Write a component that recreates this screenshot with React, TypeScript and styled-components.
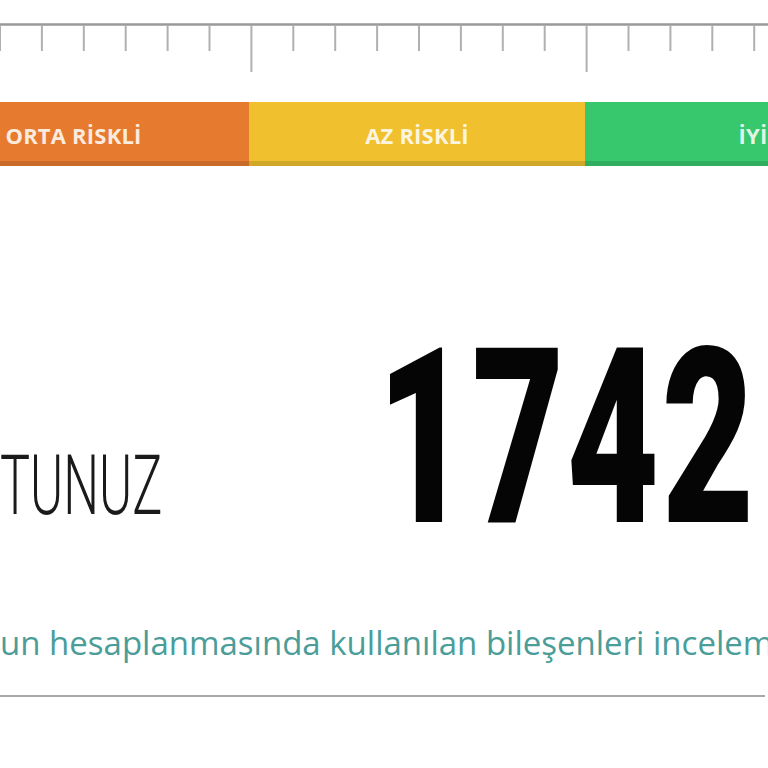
import React from "react";
import styled, { createGlobalStyle } from "styled-components";

const Global = createGlobalStyle`
  html, body {
    margin: 0;
    padding: 0;
    background: #ffffff;
    overflow: hidden;
  }
  body {
    width: 768px;
    height: 768px;
    font-family: "Open Sans", "Liberation Sans", sans-serif;
  }
`;

const Page = styled.div`
  width: 768px;
  height: 768px;
  display: flex;
  flex-direction: column;
  overflow: hidden;
`;

const RulerSvg = styled.svg`
  display: block;
  width: 768px;
  height: 76px;
  flex: none;
`;

const Bar = styled.div`
  display: flex;
  margin-top: 26px;
  margin-left: -90px;
  height: 64px;
  flex: none;
`;

const Segment = styled.div<{ $bg: string; $w: number; $shift?: number }>`
  flex: none;
  width: ${(p) => p.$w}px;
  height: 64px;
  background: ${(p) => p.$bg};
  box-shadow: inset 0 -5px 0 rgba(0, 0, 0, 0.13);
  display: flex;
  align-items: center;
  justify-content: center;
  padding-right: ${(p) => p.$shift ?? 0}px;
  padding-top: 2px;
  box-sizing: border-box;
  color: rgba(255, 255, 255, 0.86);
  font-family: "Open Sans", "Liberation Sans", sans-serif;
  font-weight: 700;
  font-size: 22px;
  letter-spacing: 0.2px;
  white-space: nowrap;
`;

const ScoreRow = styled.div`
  display: flex;
  align-items: flex-start;
  margin-top: 150px;
  height: 245px;
  flex: none;
`;

const Label = styled.div`
  flex: none;
  width: 0;
  margin-top: 128px;
  display: flex;
  font-family: "Roboto", "DejaVu Sans", sans-serif;
  font-weight: 300;
  font-size: 84px;
  line-height: 1;
  color: #1a1a1a;
  white-space: nowrap;
  transform: scaleX(0.6);
  transform-origin: 0 50%;
`;

const Hidden = styled.span`
  display: flex;
  justify-content: flex-end;
  width: 0;
`;

const Score = styled.div`
  flex: none;
  margin-left: 377px;
  font-family: "Roboto", "Liberation Sans", sans-serif;
  font-weight: 900;
  font-size: 245px;
  line-height: 1;
  color: #050505;
  letter-spacing: 4px;
  transform: scaleX(0.65);
  transform-origin: 0 50%;
`;

const InfoLink = styled.div`
  margin-top: 62px;
  display: flex;
  font-family: "Open Sans", "Noto Sans", sans-serif;
  font-size: 33px;
  line-height: 40px;
  color: #4a9d99;
  white-space: nowrap;
  flex: none;
`;

const Divider = styled.div`
  margin-top: 32px;
  width: 765px;
  height: 2px;
  background: #a9a9a9;
  flex: none;
`;

const ticks = Array.from({ length: 20 }, (_, k) => k * 41.9);

function Ruler() {
  return (
    <RulerSvg viewBox="0 0 768 76">
      <line x1="0" y1="24.5" x2="768" y2="24.5" stroke="#999999" strokeWidth="2.5" />
      {ticks.map((x, k) => {
        const long = k === 6 || k === 14;
        return (
          <line
            key={k}
            x1={x}
            y1={25}
            x2={x}
            y2={long ? 72 : 51}
            stroke="#b0b0b0"
            strokeWidth="2"
          />
        );
      })}
    </RulerSvg>
  );
}

export default function App() {
  return (
    <>
      <Global />
      <Page>
        <Ruler />
        <Bar>
          <Segment $bg="#e67b2f" $w={339} $shift={12}>ORTA RİSKLİ</Segment>
          <Segment $bg="#f0c02f" $w={336}>AZ RİSKLİ</Segment>
          <Segment $bg="#37c86e" $w={336}>İYİ</Segment>
        </Bar>
        <ScoreRow>
          <Label>
            <Hidden>KREDİ NO</Hidden>
            <span>TUNUZ</span>
          </Label>
          <Score>1742</Score>
        </ScoreRow>
        <InfoLink>
          <Hidden>Kredi Notunuz</Hidden>
          <span>un hesaplanmasında kullanılan bileşenleri incelemek için tıklayınız.</span>
        </InfoLink>
        <Divider />
      </Page>
    </>
  );
}
